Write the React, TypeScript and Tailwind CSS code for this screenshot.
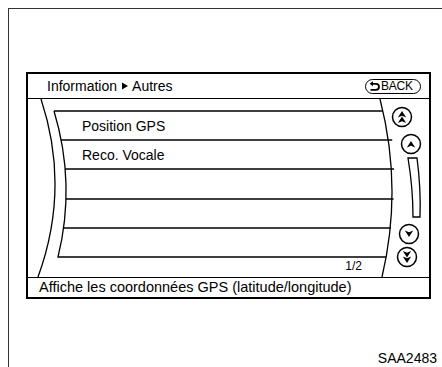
import React from "react";

function BackButton() {
  return (
    <div className="w-[56px] h-[15px] border-[1.5px] border-black rounded-full flex items-center pl-[3px] gap-[1px]">
      <svg width="11" height="11" viewBox="0 0 11 11">
        <path d="M0.5 2.8 L4 0.3 L4 5.3 Z" fill="black" />
        <path d="M3.5 2.8 H7 A3 3 0 0 1 7 8.8 H1.5" fill="none" stroke="black" strokeWidth="1.8" />
      </svg>
      <span className="text-[12px] leading-none tracking-[-0.2px]">BACK</span>
    </div>
  );
}

function Arrow({ cx, cy, dir }: { cx: number; cy: number; dir: 1 | -1 }) {
  return (
    <path
      transform={`translate(${cx} ${cy}) scale(1 ${dir})`}
      d="M0 -3.5 L4.2 3 L0 1.2 L-4.2 3 Z"
      fill="black"
    />
  );
}

function Canvas() {
  const rowYs = [41, 70, 100, 129];
  return (
    <svg className="absolute inset-0" width="401" height="178" viewBox="0 0 401 178">
      <defs>
        <clipPath id="inner">
          <path d="M26 12 L360 12 Q375 89 354 178 L0 178 L0 158 L30 158 Q48 85 26 12 Z" />
        </clipPath>
      </defs>
      <path d="M13 0 Q42.5 89 10 178" fill="none" stroke="black" strokeWidth="1.3" />
      <path d="M352 0 Q375 89 354 178" fill="none" stroke="black" strokeWidth="1.3" />
      <path d="M26 12 L355 12" stroke="black" strokeWidth="1.3" />
      <path d="M26 12 Q48 85 30 158 L358 158" fill="none" stroke="black" strokeWidth="1.3" />
      <g clipPath="url(#inner)">
        {rowYs.map((y) => (
          <line key={y} x1="0" y1={y} x2="401" y2={y} stroke="black" strokeWidth="1.3" />
        ))}
      </g>
      <circle cx="374" cy="18" r="9.5" fill="white" stroke="black" strokeWidth="1.5" />
      <Arrow cx={374} cy={15.5} dir={1} />
      <Arrow cx={374} cy={21} dir={1} />
      <circle cx="383" cy="45" r="9.5" fill="white" stroke="black" strokeWidth="1.5" />
      <Arrow cx={383} cy={45.5} dir={1} />
      <path d="M380 59 L389 59 Q393 89 392 118 L385 118 Q385 89 380 59 Z" fill="white" stroke="black" strokeWidth="1.3" />
      <circle cx="381" cy="135" r="9.5" fill="white" stroke="black" strokeWidth="1.5" />
      <Arrow cx={381} cy={134.5} dir={-1} />
      <circle cx="379" cy="158" r="9.5" fill="white" stroke="black" strokeWidth="1.5" />
      <Arrow cx={379} cy={155} dir={-1} />
      <Arrow cx={379} cy={160.5} dir={-1} />
    </svg>
  );
}

export default function App() {
  const rows = ["Position GPS", "Reco. Vocale", "", "", ""];
  return (
    <div className="w-[442px] h-[367px] bg-white pl-2 pt-2 text-black font-['Liberation_Sans',Arial,sans-serif] overflow-hidden">
      <div className="h-full border-l border-t border-[#333] pl-[17px] pt-[63px] flex flex-col">
        <div className="w-[405px] h-[227px] shrink-0 border-2 border-black flex flex-col">
          <div className="h-[25px] shrink-0 border-b border-black flex items-center justify-between pl-[19px] pr-[8px]">
            <span className="text-[14px] leading-none flex items-center">
              Information
              <svg width="13" height="8" viewBox="0 0 13 8" className="mx-[1px]">
                <path d="M4 0.5 L10 4 L4 7.5 Z" fill="black" />
              </svg>
              Autres
            </span>
            <BackButton />
          </div>
          <div className="flex-1 relative">
            <Canvas />
            <div className="relative pt-[12px] flex flex-col">
              {rows.map((r, i) => (
                <div key={i} className="h-[29.2px] flex items-center pl-[54px] text-[14px] leading-none">
                  {r}
                </div>
              ))}
              <div className="h-[18px] flex items-center justify-end pr-[67px] text-[12px] leading-none">1/2</div>
            </div>
          </div>
          <div className="h-[20px] shrink-0 border-t border-black flex items-center pl-[11px] text-[14.5px] leading-none whitespace-nowrap">
            Affiche les coordonnées GPS (latitude/longitude)
          </div>
        </div>
        <div className="self-end mr-[5px] mt-[52px] text-[14px] leading-none">SAA2483</div>
      </div>
    </div>
  );
}
